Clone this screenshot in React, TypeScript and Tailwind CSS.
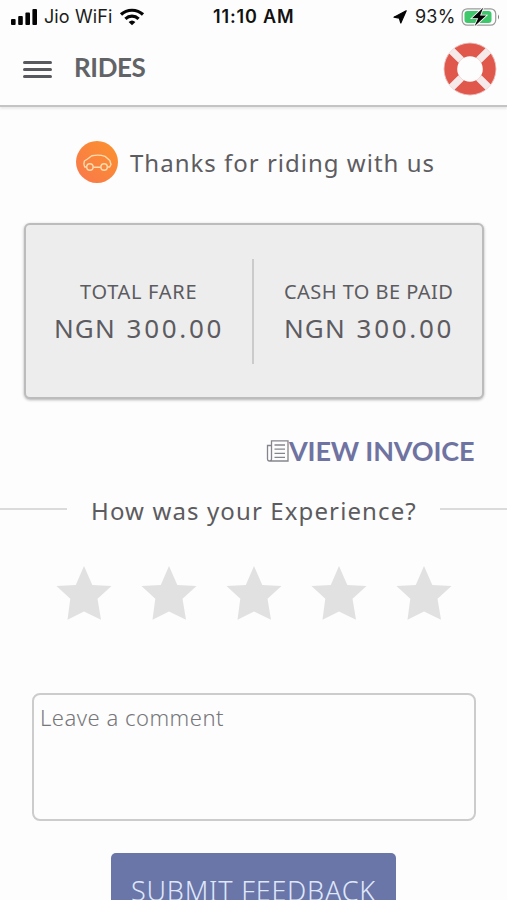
import React from "react";

const maven = "font-['Noto_Sans',sans-serif]";

function StatusBar() {
  return (
    <div className="flex h-[34px] shrink-0 items-center font-[Inter,sans-serif] text-[18px] leading-none text-[#1c1c1c]">
      <svg className="ml-[10px] h-[18px] w-[28px]" viewBox="0 0 28 18" fill="#050505">
        <rect x="1" y="11" width="4.6" height="6" rx="1" />
        <rect x="8.2" y="8" width="4.6" height="9" rx="1" />
        <rect x="15.4" y="4.5" width="4.6" height="12.5" rx="1" />
        <rect x="22.4" y="1" width="4.6" height="16" rx="1" />
      </svg>
      <span className="ml-[6px] w-[71px] whitespace-nowrap tracking-[0.1px]">Jio WiFi</span>
      <svg className="ml-[4px] h-[18px] w-[26px]" viewBox="0 0 26 18" fill="none" stroke="#050505" strokeWidth="3.2">
        <path d="M2 6.5C8 .8 18 .8 24 6.5" />
        <path d="M6.4 10.8C10.2 7.2 15.8 7.2 19.6 10.8" />
        <path d="M13 17.2L9.6 13.9Q13 10.9 16.4 13.9Z" fill="#050505" stroke="none" />
      </svg>
      <span className="ml-[68px] w-[84px] whitespace-nowrap font-semibold tracking-[0.85px] text-[#111]">11:10 AM</span>
      <svg className="ml-[95px] h-[16px] w-[16px]" viewBox="0 0 16 16" fill="#050505">
        <path d="M14.2 1.8L2 8.2 7.3 9.1 8.8 14Z" stroke="#050505" strokeWidth="1.2" strokeLinejoin="round" />
      </svg>
      <span className="ml-[7px] w-[42px] whitespace-nowrap tracking-[0.2px]">93%</span>
      <svg className="ml-[4px] h-[20px] w-[40px]" viewBox="0 0 40 20">
        <rect x="1.2" y="1.8" width="33.5" height="16.4" rx="5" fill="#fdfdfd" stroke="#9b9b9b" strokeWidth="1.2" />
        <rect x="3.5" y="4" width="27" height="12" rx="3" fill="#3fc76b" />
        <path d="M37 7.5v5q2-2.5 0-5Z" fill="#777" />
        <path d="M22.2.8L11 11.2h6.2L13.5 19.3 25.2 8.6h-6.1Z" fill="#050505" stroke="#fff" strokeWidth="1.6" paintOrder="stroke" />
      </svg>
    </div>
  );
}

function Lifebuoy() {
  return (
    <svg className="mr-[10px] mt-[8px] h-[54px] w-[54px]" viewBox="0 0 54 54">
      <circle cx="27" cy="27" r="19.5" fill="none" stroke="#e0574c" strokeWidth="13.4" />
      <g stroke="#f5e9ea" strokeWidth="7.5">
        <path d="M8.3 8.3L18.2 18.2M45.7 8.3L35.8 18.2M8.3 45.7L18.2 35.8M45.7 45.7L35.8 35.8" />
      </g>
      <circle cx="27" cy="27" r="26" fill="none" stroke="#eee2e3" strokeWidth=".7" />
    </svg>
  );
}

function Header() {
  return (
    <header className="flex h-[73px] shrink-0 border-b-2 border-[#c4c4c4] shadow-[0_2px_2px_rgba(0,0,0,0.08)]">
      <div className="ml-[23px] mt-[27px] flex h-[17px] w-[29px] flex-col justify-between">
        <i className="h-[3px] rounded-full bg-[#58595e]" />
        <i className="h-[3px] rounded-full bg-[#58595e]" />
        <i className="h-[3px] rounded-full bg-[#58595e]" />
      </div>
      <h1 className="ml-[22px] mt-[17px] flex-1 font-[Lato,sans-serif] text-[26px] font-bold leading-[32px] tracking-[-0.4px] text-[#626367]">RIDES</h1>
      <Lifebuoy />
    </header>
  );
}

function CarBadge() {
  return (
    <svg className="h-[44px] w-[44px] shrink-0" viewBox="0 0 44 44">
      <defs>
        <linearGradient id="badge" x1="1" y1="0" x2="0" y2="1">
          <stop stopColor="#fb922c" />
          <stop offset="1" stopColor="#f9774d" />
        </linearGradient>
      </defs>
      <circle cx="22" cy="22" r="21" fill="url(#badge)" />
      <g fill="none" stroke="#fddcae" strokeWidth="1.4" strokeLinejoin="round">
        <path d="M11.6 27H9.7Q8.2 24 9.4 21L12.5 19 16.8 15.8Q24 14.2 30 16.3L34.8 20.5 36 24.5 34.7 27H32.4M18.2 27.2H25.8" />
        <circle cx="14.9" cy="27" r="3.2" />
        <circle cx="29.1" cy="27" r="3.2" />
      </g>
    </svg>
  );
}

function Amount() {
  return (
    <span className="mt-[2px] whitespace-nowrap text-[26px] leading-[38px]">
      <span className="tracking-[1.1px] [word-spacing:3px]">NGN </span>
      <span className="tracking-[2.7px]">300.00</span>
    </span>
  );
}

function FareCard() {
  return (
    <section className={`${maven} ml-[24px] mr-[23px] mt-[39px] flex h-[176px] shrink-0 items-center rounded-[6px] border-2 border-[#bcbcbe] bg-[#ededee] text-[#5c5b60] shadow-[0_1px_3px_rgba(0,0,0,0.3)]`}>
      <div className="flex h-[105px] w-[228px] flex-col border-r-2 border-[#cbcbcc] pl-[28px] pt-[18px]">
        <span className="whitespace-nowrap pl-[26px] text-[20px] leading-[30px] tracking-[0.7px]">TOTAL FARE</span>
        <Amount />
      </div>
      <div className="flex h-[105px] flex-col pl-[30px] pt-[18px]">
        <span className="whitespace-nowrap text-[20px] leading-[30px] tracking-[0.45px]">CASH TO BE PAID</span>
        <Amount />
      </div>
    </section>
  );
}

function InvoiceLink() {
  return (
    <a className="mt-[34px] flex h-[36px] shrink-0 items-center pl-[266px] font-[Lato,sans-serif] text-[27px] font-bold leading-[36px] text-[#6f73a1]">
      <svg className="h-[24px] w-[23px] shrink-0" viewBox="0 0 23 24" fill="none" stroke="#85868c" strokeWidth="1.3">
        <path d="M5.5 20V1.8H22V22H3.5Q1.5 22 1.5 20V6.5H5.5V20Q5.5 22 3.5 22M8.5 6H19M8.5 10.2H19M8.5 14.4H19M8.5 18.4H19" />
      </svg>
      <span className="whitespace-nowrap tracking-[-0.15px]">VIEW INVOICE</span>
    </a>
  );
}

function Star() {
  return (
    <svg className="h-[56px] w-[56px]" viewBox="0 0 56 56" fill="#e1e1e1">
      <path d="M28 1L36.3 20 55.5 21 41.5 33.8 45 54.8 28 46.5 11.5 54.8 14.3 33.8 .5 21 19.8 20Z" />
    </svg>
  );
}

export default function App() {
  return (
    <main className="flex h-[900px] w-[507px] flex-col overflow-hidden bg-[#fdfdfd]">
      <StatusBar />
      <Header />
      <div className={`${maven} mt-[32px] flex h-[45px] shrink-0 items-center pl-[75px] text-[24px] leading-[45px] text-[#5d5c61]`}>
        <CarBadge />
        <span className="ml-[11px] mt-px whitespace-nowrap tracking-[1px]">Thanks for riding with us</span>
      </div>
      <FareCard />
      <InvoiceLink />
      <div className="mt-[18px] flex h-[44px] shrink-0 items-center justify-between">
        <i className="h-[2px] w-[67px] bg-[#dbdbdb]" />
        <span className={`${maven} ml-[24px] flex-1 whitespace-nowrap pt-[3px] text-[24px] leading-[41px] tracking-[1.12px] text-[#5c5b60]`}>How was your Experience?</span>
        <i className="h-[2px] w-[67px] bg-[#dbdbdb]" />
      </div>
      <div className="mt-[34px] flex h-[56px] shrink-0 gap-[29px] pl-[56px]">
        <Star />
        <Star />
        <Star />
        <Star />
        <Star />
      </div>
      <div className={`${maven} ml-[32px] mt-[72px] h-[128px] w-[444px] shrink-0 rounded-[8px] border-2 border-[#cccccc] pl-[6px] pt-[5px] text-[22px] font-light leading-[34px] tracking-[0.5px] text-[#77777b]`}>
        Leave a comment
      </div>
      <button className={`${maven} ml-[111px] mt-[32px] flex h-[47px] w-[285px] shrink-0 items-start whitespace-nowrap rounded-t-[5px] bg-[#6a75a8] pl-[20px] pt-[19px] text-left text-[27px] font-light leading-[37px] tracking-[0.8px] text-[#dfe7fb]`}>
        SUBMIT FEEDBACK
      </button>
    </main>
  );
}
